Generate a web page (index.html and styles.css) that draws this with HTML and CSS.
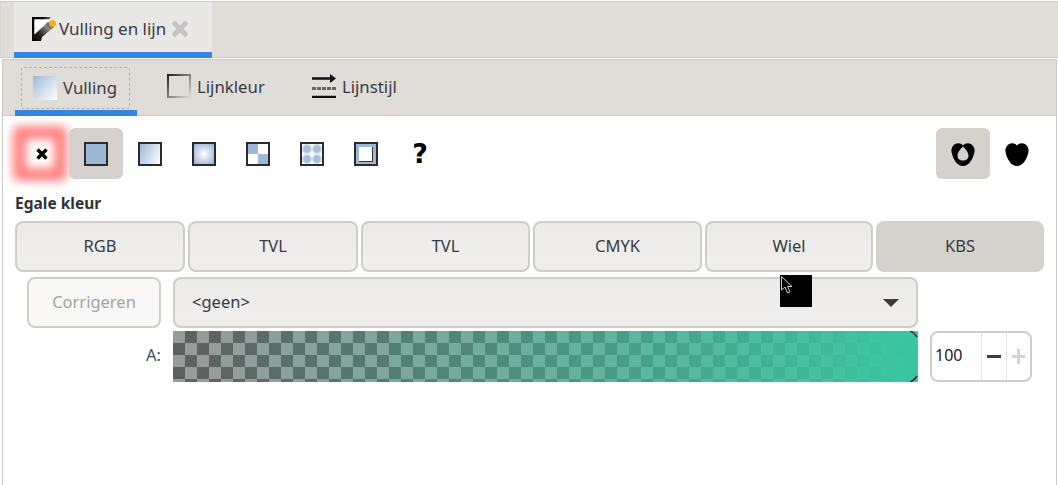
FILE: index.html
```html
<!DOCTYPE html>
<html lang="nl">
<head>
<meta charset="utf-8">
<title>Vulling en lijn</title>
<link rel="stylesheet" href="styles.css">
</head>
<body>
<div class="dock">
  <div class="tabbar">
    <div class="tab">
      <svg class="tab-icon" width="24" height="24" viewBox="0 0 24 24">
        <defs>
          <linearGradient id="pg" x1="0" y1="1" x2="1" y2="0"><stop offset="0" stop-color="#000"/><stop offset=".35" stop-color="#222"/><stop offset=".7" stop-color="#888"/><stop offset="1" stop-color="#333"/></linearGradient>
          <linearGradient id="pt" x1="0" y1="0" x2="1" y2="0"><stop offset="0" stop-color="#000"/><stop offset=".6" stop-color="#111"/><stop offset="1" stop-color="#777"/></linearGradient>
        </defs>
        <path d="M0 0H19L17 2.5H2.5V17L0 19Z" fill="url(#pt)"/>
        <path d="M2.5 2.5H18L2.5 18Z" fill="#fff"/>
        <path d="M0 24V17L3 17L16 5L22 10L10 20L9 24Z" fill="url(#pg)"/>
        <circle cx="20.5" cy="6.5" r="3.5" fill="#f2b01e"/>
      </svg>
      <span>Vulling en lijn</span>
      <svg class="tab-close" width="16" height="16" viewBox="0 0 16 16"><path d="M3 3L13 13M13 3L3 13" stroke="#c4c4c0" stroke-width="5" stroke-linecap="square"/></svg>
    </div>
  </div>
  <div class="panel">
    <div class="subtabs">
      <div class="subtab active">
        <div class="focus">
          <span class="sw-fill"></span><span>Vulling</span>
        </div>
      </div>
      <div class="subtab stroke-tab"><span class="sw-stroke"></span><span>Lijnkleur</span></div>
      <div class="subtab style-tab">
        <svg width="24" height="24" viewBox="0 0 24 24"><path d="M0 4.5H20M0 23H24" stroke="#111" stroke-width="2.4" fill="none"/><path d="M18 0L24 4.5L18 9Z" fill="#111"/><path d="M0 14.5H24" stroke="#666" stroke-width="3" stroke-dasharray="4 1" fill="none"/></svg>
        <span>Lijnstijl</span>
      </div>
    </div>
    <div class="content">
      <div class="modes">
        <div class="mode none"><svg width="16" height="16" viewBox="0 0 16 16"><path d="M3.5 3.5L12.5 12.5M12.5 3.5L3.5 12.5" stroke="#000" stroke-width="3.4"/></svg></div>
        <div class="mode on"><span class="ic flat"></span></div>
        <div class="mode"><span class="ic linear"></span></div>
        <div class="mode"><span class="ic radial"></span></div>
        <div class="mode"><span class="ic checks"></span></div>
        <div class="mode"><span class="ic dots"></span></div>
        <div class="mode"><span class="ic inset"><span></span></span></div>
        <div class="mode q">?</div>
        <div class="spacer"></div>
        <div class="mode on"><svg width="24" height="24" viewBox="0 0 24 24"><path fill-rule="evenodd" d="M4 2C7 .5 10 1 12 3.5C14 1 17 .5 20 2C23 4 24 7 23.5 10C22 17 18 24 12 24C6 24 2 17 .5 10C0 7 1 4 4 2ZM12 4.5C9.5 7 6.5 10 6.5 14C6.5 17 9 18.5 12 18.5C15 18.5 17.5 17 17.5 14C17.5 10 14.5 7 12 4.5Z" fill="#000"/></svg></div>
        <div class="mode"><svg width="24" height="24" viewBox="0 0 24 24"><path d="M4 2C7 .5 10 1 12 3.5C14 1 17 .5 20 2C23 4 24 7 23.5 10C22 17 18 24 12 24C6 24 2 17 .5 10C0 7 1 4 4 2Z" fill="#000"/></svg></div>
      </div>
      <div class="heading">Egale kleur</div>
      <div class="pickers">
        <div class="btn">RGB</div>
        <div class="btn">TVL</div>
        <div class="btn">TVL</div>
        <div class="btn">CMYK</div>
        <div class="btn">Wiel</div>
        <div class="btn selected">KBS</div>
      </div>
      <div class="form">
        <div class="btn disabled">Corrigeren</div>
        <div class="btn combo"><span>&lt;geen&gt;</span><i class="arrow"></i></div>
        <div class="empty"></div>
        <div class="alpha-label">A:</div>
        <div class="alpha">
          <svg class="notch top" width="8" height="8" viewBox="0 0 8 8"><path d="M0 0C3 1 5 3 7 6" stroke="#333" stroke-width="1.6" fill="none"/></svg>
          <svg class="notch bottom" width="8" height="8" viewBox="0 0 8 8"><path d="M0 8C3 7 5 5 7 2" stroke="#333" stroke-width="1.6" fill="none"/></svg>
        </div>
        <div class="spin">
          <span class="spin-val">100</span>
          <span class="spin-btn minus"></span>
          <span class="spin-btn plus"></span>
        </div>
      </div>
      <div class="cursor">
        <svg width="16" height="20" viewBox="0 0 16 20"><path d="M1.5 1.5V15L5 12L7.5 18L10 17L7.5 11.5H12Z" fill="#000" stroke="#ccc" stroke-width="1"/></svg>
      </div>
    </div>
  </div>
</div>
</body>
</html>
```
FILE: styles.css
```css
*, *::before, *::after { box-sizing: border-box; }
html, body { margin: 0; height: 100%; overflow: hidden; }
body { background: #fff; font-family: "Noto Sans", "Open Sans", sans-serif; font-size: 16.5px; color: #2e3436; }
.dock { height: 485px; display: flex; flex-direction: column; position: relative; }
.tabbar { height: 57px; background: #e0dcd8; border-top: 1px solid #cdc8c3; border-bottom: 1px solid #cdc8c3; border-left: 1px solid #d6d2ce; padding-left: 13px; margin-top: 1px; }
.tab { width: 198px; height: 56px; background: #e9e8e6; border-bottom: 6px solid #3584e4; display: flex; align-items: center; padding-left: 18px; color: #3c3a44; padding-top: 3px; font-size: 17px; line-height: 20px; }
.tab-icon { margin-right: 3px; }
.tab-close { margin-left: 6px; }
.panel { flex: 1; margin: 1px 1px 0 2px; border-left: 1px solid #cdc8c3; border-right: 1px solid #cdc8c3; border-top: 1px solid #cdc8c3; display: flex; flex-direction: column; }
.subtabs { height: 56px; background: #e0dcd8; display: flex; border-bottom: 1px solid #cdc8c3; padding-left: 12px; font-size: 16.8px; }
.subtab { display: flex; align-items: center; color: #3c3a44; gap: 6px; padding-bottom: 3px; }
.subtab.active { width: 122px; height: 56px; border-bottom: 6px solid #3584e4; padding: 7px 7px 1px 6px; }
.focus { flex: 1; height: 42px; border: 1px dashed #b4b0ac; border-radius: 3px; display: flex; align-items: center; padding-left: 11px; gap: 6px; padding-bottom: 1px; }
.sw-fill { width: 24px; height: 24px; background: linear-gradient(135deg, #a0b9d6, #fff); }
.sw-stroke { width: 24px; height: 24px; border: 2px solid; border-image: linear-gradient(135deg, #222, #e0dcd8) 1; }
.stroke-tab { margin-left: 30px; }
.style-tab { margin-left: 47px; }
.content { flex: 1; background: #fff; position: relative; padding: 12px 12px 0 12px; }
.modes { display: flex; height: 51px; }
.mode { width: 54px; height: 51px; border-radius: 6px; display: flex; align-items: center; justify-content: center; position: relative; }
.mode svg, .mode .ic { position: relative; }
.mode.on { background: #d5d1cd; }
.mode.none::before { content: ""; position: absolute; left: -2px; top: -2px; width: 54px; height: 55px; border: 13px solid #ff8080; background: #fff; filter: blur(5px); border-radius: 6px; }
.q { font-family: "DejaVu Sans", sans-serif; font-weight: 700; font-size: 27px; color: #000; }
.spacer { flex: 1; }
.ic { width: 24px; height: 24px; border: 2px solid #2b2b2b; display: block; }
.flat { background: #9db8d6; }
.linear { background: linear-gradient(115deg, #9db8d6, #fff); }
.radial { background: radial-gradient(circle, #fff, #9db8d6 90%); }
.checks { background: conic-gradient(#fff 0 25%, #9db8d6 0 50%, #fff 0 75%, #9db8d6 0); }
.dots { background-color: #fff; background-image: radial-gradient(circle, #a6bfdb 3px, #e4ecf4 5px, #fff 6px); background-size: 10px 10px; }
.inset { background: #9db8d6; padding: 3px 3px 2px 3px; }
.inset span { display: block; width: 100%; height: 100%; background: #fff; border-right: 1px solid #333; border-bottom: 1px solid #333; }
.heading { font-weight: 700; font-size: 15.5px; margin: 14px 0 0 0; line-height: 20px; color: #2e3436; }
.pickers { display: grid; grid-template-columns: 170px 170px 169px 169px 168px 168px; gap: 3px; margin-top: 8px; height: 51px; }
.btn { border: 2px solid #d0ccc7; border-radius: 8px; background: linear-gradient(#ecebe9, #f0efed); display: flex; align-items: center; justify-content: center; color: #3a3a42; padding-bottom: 3px; }
.btn.selected { background: #d5d1cd; border-color: #d5d1cd; }
.form { display: grid; grid-template-columns: 134px 745px 102px; grid-template-rows: 51px 51px; column-gap: 12px; row-gap: 3px; padding-left: 12px; margin-top: 5px; }
.btn.disabled { background: #faf8f7; color: #a5a19f; }
.combo { justify-content: space-between; padding: 0 17px 0 17px; }
.combo span { padding-bottom: 3px; }
.arrow { width: 0; height: 0; border-left: 8px solid transparent; border-right: 8px solid transparent; border-top: 8px solid #3a3a3a; }
.alpha-label { text-align: right; line-height: 47px; color: #3a5068; }
.alpha { position: relative; background: linear-gradient(90deg, rgba(57,198,162,0), #39c6a2 100%), conic-gradient(#5f5f5f 0 25%, #9a9a9a 0 50%, #5f5f5f 0 75%, #9a9a9a 0); background-size: 100% 100%, 24px 24px; }
.notch { position: absolute; right: 0; }
.notch.top { top: 0; }
.notch.bottom { bottom: 0; }
.spin { border: 2px solid #d0ccc7; border-radius: 8px; display: flex; background: #fff; overflow: hidden; }
.spin-val { width: 49px; line-height: 44px; padding-left: 3px; color: #222; font-size: 16px; }
.spin-btn { flex: 1; border-left: 1px solid #e6e4e2; position: relative; }
.spin-btn::before, .plus::after { content: ""; position: absolute; left: 5px; right: 5px; top: 22px; height: 3px; background: #3d3d3d; }
.plus::before, .plus::after { background: #d5d3d1; }
.plus::after { left: 10px; right: 10px; top: 16px; height: 15px; width: 3px; }
.cursor { position: absolute; left: 777px; top: 159px; width: 32px; height: 32px; background: #000; }
.cursor svg { display: block; }
```
